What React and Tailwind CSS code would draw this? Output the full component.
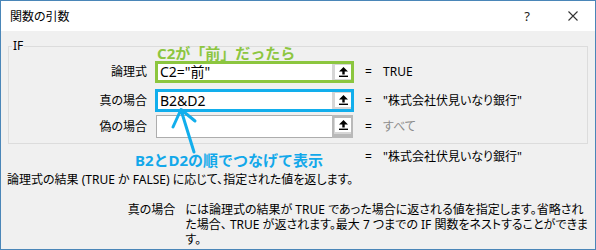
const font = { fontFamily: '"Noto Sans", "Noto Sans CJK JP", sans-serif' }

function RefIcon() {
  return (
    <svg width="9" height="10" viewBox="0 0 9 10">
      <path d="M4.5 0 L0 4.5 L3.3 4.5 L3.3 7.5 L5.7 7.5 L5.7 4.5 L9 4.5 Z" fill="#000" />
      <rect x="0" y="8.6" width="9" height="1.4" fill="#000" />
    </svg>
  )
}

function RefButton({ framed }) {
  return (
    <div
      className={
        framed
          ? 'w-[21px] h-full border-[2px] border-t-[3px] border-b-[4px] border-[#b9b9b9] bg-[#d6d6d6] flex items-start justify-end'
          : 'w-[19px] h-full bg-[#d6d6d6] flex items-start justify-end pt-[1px]'
      }
    >
      <div className="w-[16px] h-[14px] bg-white flex items-center justify-center">
        <RefIcon />
      </div>
    </div>
  )
}

function ArgRow({ label, value, border, result, resultGrey, className, h }) {
  return (
    <div className={'flex items-center ' + className}>
      <div className="w-[138px] text-right leading-[16px]">{label}</div>
      {border ? (
        <div className={'ml-[8px] w-[199px] flex bg-white border-[3px] ' + border + ' ' + h}>
          <div className="flex-1 pl-[2px] text-[14px] leading-[16px] flex items-center">{value}</div>
          <RefButton />
        </div>
      ) : (
        <div className={'ml-[9px] mr-[1px] w-[197px] flex ' + h}>
          <div className="flex-1 bg-white border border-[#adadad] border-r-0" />
          <RefButton framed />
        </div>
      )}
      <span className="ml-[11px] w-[18px] leading-[16px]">=</span>
      <span className={'leading-[16px] ' + (resultGrey ? 'text-[#8c8c8c]' : '')}>{result}</span>
    </div>
  )
}

export default function App() {
  return (
    <div
      style={font}
      className="relative w-[596px] h-[250px] border border-[#4a86b8] bg-[#f0f0f0] text-[12px] text-black [font-feature-settings:'palt'] flex flex-col overflow-hidden"
    >
      {/* title bar */}
      <div className="h-[30px] bg-white flex items-center pl-[9px] shrink-0">
        <span className="leading-[16px] mt-[1px]">関数の引数</span>
        <span className="ml-auto text-[13px] leading-[16px] text-[#222]">?</span>
        <svg className="ml-[38px] mr-[17px]" width="10" height="10" viewBox="0 0 10 10">
          <path d="M0.5 0.5 L9.5 9.5 M9.5 0.5 L0.5 9.5" stroke="#333" strokeWidth="1.1" />
        </svg>
      </div>

      <div className="px-[7px] flex flex-col">
        <fieldset className="mt-[8px] border border-[#dcdcdc] pb-[5px]">
          <legend className="ml-[3px] px-[1px] leading-[14px]">IF</legend>
          <div className="-mt-[8px] h-[16px] pl-[148px] text-[15px] font-bold leading-[16px] text-[#8cc63f] [font-feature-settings:normal]">
            C2が「前」だったら
          </div>
          <ArgRow
            label="論理式"
            value={'C2="前"'}
            border="border-[#8cc63f]"
            h="h-[22px]"
            result="TRUE"
          />
          <ArgRow
            label="真の場合"
            value="B2&D2"
            border="border-[#12aeec]"
            h="h-[23px]"
            className="mt-[6px]"
            result={'"株式会社伏見いなり銀行"'}
          />
          <ArgRow label="偽の場合" h="h-[23px]" className="mt-[3px]" result="すべて" resultGrey />
        </fieldset>

        <div className="flex items-start mt-[5px]">
          <div className="ml-[127px] w-[230px] mt-[3px] text-[15px] font-bold leading-[16px] text-[#12a8ea] whitespace-nowrap [font-feature-settings:normal]">
            B2とD2の順でつなげて表示
          </div>
          <span className="w-[18px] leading-[16px]">=</span>
          <span className="leading-[16px]">"株式会社伏見いなり銀行"</span>
        </div>

        <div className="mt-[4px] -ml-[1px] leading-[15px] whitespace-nowrap">
          論理式の結果 (TRUE か FALSE) に応じて、指定された値を返します。
        </div>

        <div className="mt-[15px] flex leading-[15px]">
          <div className="w-[195px] text-right">真の場合</div>
          <div className="ml-[10px] whitespace-nowrap">
            <div>には論理式の結果が TRUE であった場合に返される値を指定します。省略され</div>
            <div>た場合、 TRUE が返されます。最大 7 つまでの IF 関数をネストすることができま</div>
            <div>す。</div>
          </div>
        </div>
      </div>

      {/* callout arrow */}
      <svg
        className="absolute left-[167px] top-[104px] pointer-events-none"
        width="32"
        height="50"
        viewBox="0 0 32 50"
      >
        <path
          d="M26 47 L13 5 M5 22 L13 4.5 L27 16"
          stroke="#12aeec"
          strokeWidth="3"
          fill="none"
          strokeLinecap="round"
          strokeLinejoin="round"
        />
      </svg>
    </div>
  )
}
